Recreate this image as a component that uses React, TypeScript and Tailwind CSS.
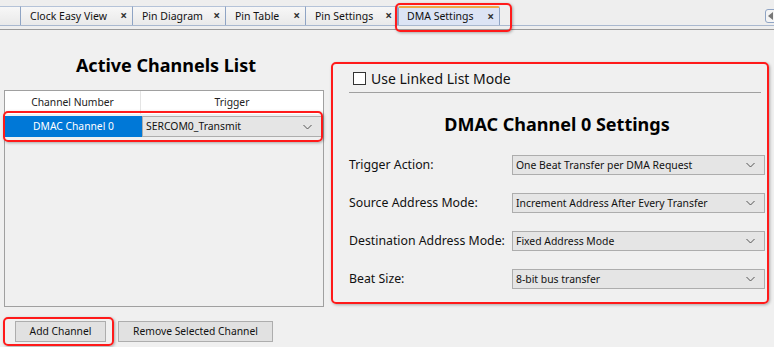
import React from "react";

const font = { fontFamily: '"Noto Sans", "Open Sans", sans-serif' };

function Chevron() {
  return (
    <svg width="9" height="6" viewBox="0 0 9 6" className="shrink-0">
      <path d="M0.5 1 L4.5 5 L8.5 1" fill="none" stroke="#555" strokeWidth="1" />
    </svg>
  );
}

function Combo({ text, className = "" }: { text: string; className?: string }) {
  return (
    <div
      className={`flex items-center justify-between bg-[#e5e5e5] border border-[#adadad] pl-[3px] pr-[9px] text-[10.4px] text-[#111] whitespace-nowrap ${className}`}
    >
      <span className="leading-none">{text}</span>
      <Chevron />
    </div>
  );
}

function Tab({ label, w, selected = false }: { label: string; w: number; selected?: boolean }) {
  return (
    <div
      style={{ width: w }}
      className={
        selected
          ? "h-[19px] flex items-center justify-between pl-[8px] pr-[5px] border-x border-[#8fa4c4] border-t-2 border-t-[#f0a844] bg-[#dce4f5] rounded-t-[2px]"
          : "h-[19px] flex items-center justify-between pl-[9px] pr-[5px] border-r border-[#8fa4c4] border-t border-t-[#b5c3d8] bg-gradient-to-b from-[#f7f7f7] to-[#e9e9e9]"
      }
    >
      <span className="text-[10.5px] text-[#111] leading-none whitespace-nowrap">{label}</span>
      <span className="text-[12px] font-bold text-[#333] leading-none">×</span>
    </div>
  );
}

export default function App() {
  return (
    <div className="relative w-[774px] h-[347px] bg-[#f0f0f0] overflow-hidden" style={font}>
      {/* Tab bar */}
      <div className="h-[30px] bg-[#eeeeee] flex flex-col">
        <div className="h-[25px] flex items-end relative">
          <div className="w-[21px] h-[19px] border-r border-[#8fa4c4] border-t border-t-[#b5c3d8] bg-gradient-to-b from-[#f7f7f7] to-[#e9e9e9]" />
          <Tab label="Clock Easy View" w={112} />
          <Tab label="Pin Diagram" w={93} />
          <Tab label="Pin Table" w={80} />
          <Tab label="Pin Settings" w={92} />
          <Tab label="DMA Settings" w={102} selected />
          <div className="flex-1" />
          <div className="self-start mt-[9px] w-[12px] h-[14px] mr-[-3px] rounded-[3px] border border-[#8fa4c4] bg-[#f4f4f4] flex items-center justify-center">
            <svg width="6" height="8" viewBox="0 0 6 8">
              <path d="M5 0 L0 4 L5 8 Z" fill="#777" />
            </svg>
          </div>
        </div>
        <div className="h-px bg-[#a9b8cf]" />
        <div className="h-[3px]" />
        <div className="h-px bg-[#9a9a9a]" />
      </div>

      <div className="flex">
        {/* Left panel */}
        <div className="w-[331px] flex flex-col">
          <div className="h-[60px] pt-[10px] flex items-center justify-center">
            <span className="text-[18px] font-bold text-black pl-[1px]">Active Channels List</span>
          </div>
          <div className="ml-[4px] w-[320px] h-[217px] border border-[#a0a0a0] bg-[#f0f0f0] flex flex-col">
            <div className="h-[23px] flex bg-white text-[10.3px] text-[#222]">
              <div className="w-[136px] border-r border-[#e4e4e4] flex items-center justify-center">Channel Number</div>
              <div className="flex-1 flex items-center justify-center">Trigger</div>
            </div>
            <div className="h-px bg-[#f0f0f0]" />
            <div className="mt-[1px] h-[21px] flex">
              <div className="w-[137px] bg-[#0078d7] text-white text-[10.3px] flex items-center justify-center">
                DMAC Channel 0
              </div>
              <Combo text="SERCOM0_Transmit" className="flex-1 mr-[1px] border-[#a9a9a9]" />
            </div>
          </div>
          <div className="flex gap-[12px] mt-[14px] ml-[15px]">
            <button className="w-[91px] h-[21px] bg-[#e1e1e1] border border-[#adadad] text-[10.3px] text-[#111]">
              Add Channel
            </button>
            <button className="w-[155px] h-[21px] bg-[#e1e1e1] border border-[#adadad] text-[10.3px] text-[#111]">
              Remove Selected Channel
            </button>
          </div>
        </div>

        {/* Right panel */}
        <div className="flex-1 pl-[18px] pr-[9px] flex flex-col">
          <div className="h-[62px] pt-[34px] flex items-center gap-[5px] pl-[4px]">
            <div className="w-[13px] h-[13px] border border-[#333] bg-white" />
            <span className="text-[14px] text-[#111]">Use Linked List Mode</span>
          </div>
          <div className="h-px bg-[#a0a0a0] mr-[4px]" />
          <div className="h-[62px] flex items-center justify-center">
            <span className="text-[18px] font-bold text-black">DMAC Channel 0 Settings</span>
          </div>
          <div className="flex flex-col gap-[18px]">
            {[
              ["Trigger Action:", "One Beat Transfer per DMA Request"],
              ["Source Address Mode:", "Increment Address After Every Transfer"],
              ["Destination Address Mode:", "Fixed Address Mode"],
              ["Beat Size:", "8-bit bus transfer"],
            ].map(([l, v]) => (
              <div key={l} className="flex items-center h-[20px]">
                <span className="w-[163px] text-[12.3px] text-[#111] whitespace-nowrap">{l}</span>
                <Combo text={v} className="flex-1 h-[20px]" />
              </div>
            ))}
          </div>
        </div>
      </div>

      {/* Red annotation highlights */}
      <div className="absolute left-[395px] top-[3px] w-[117px] h-[29px] rounded-[5px] border-2 border-[#ff1a1a] shadow-[1px_1px_3px_rgba(0,0,0,0.3)]" />
      <div className="absolute left-[3px] top-[111px] w-[320px] h-[31px] rounded-[5px] border-2 border-[#ff1a1a] shadow-[1px_1px_3px_rgba(0,0,0,0.3)]" />
      <div className="absolute left-[3px] top-[317px] w-[111px] h-[29px] rounded-[5px] border-2 border-[#ff1a1a] shadow-[1px_1px_3px_rgba(0,0,0,0.3)]" />
      <div className="absolute left-[331px] top-[62px] w-[438px] h-[242px] rounded-[5px] border-2 border-[#ff1a1a] shadow-[1px_1px_3px_rgba(0,0,0,0.3)]" />
    </div>
  );
}
